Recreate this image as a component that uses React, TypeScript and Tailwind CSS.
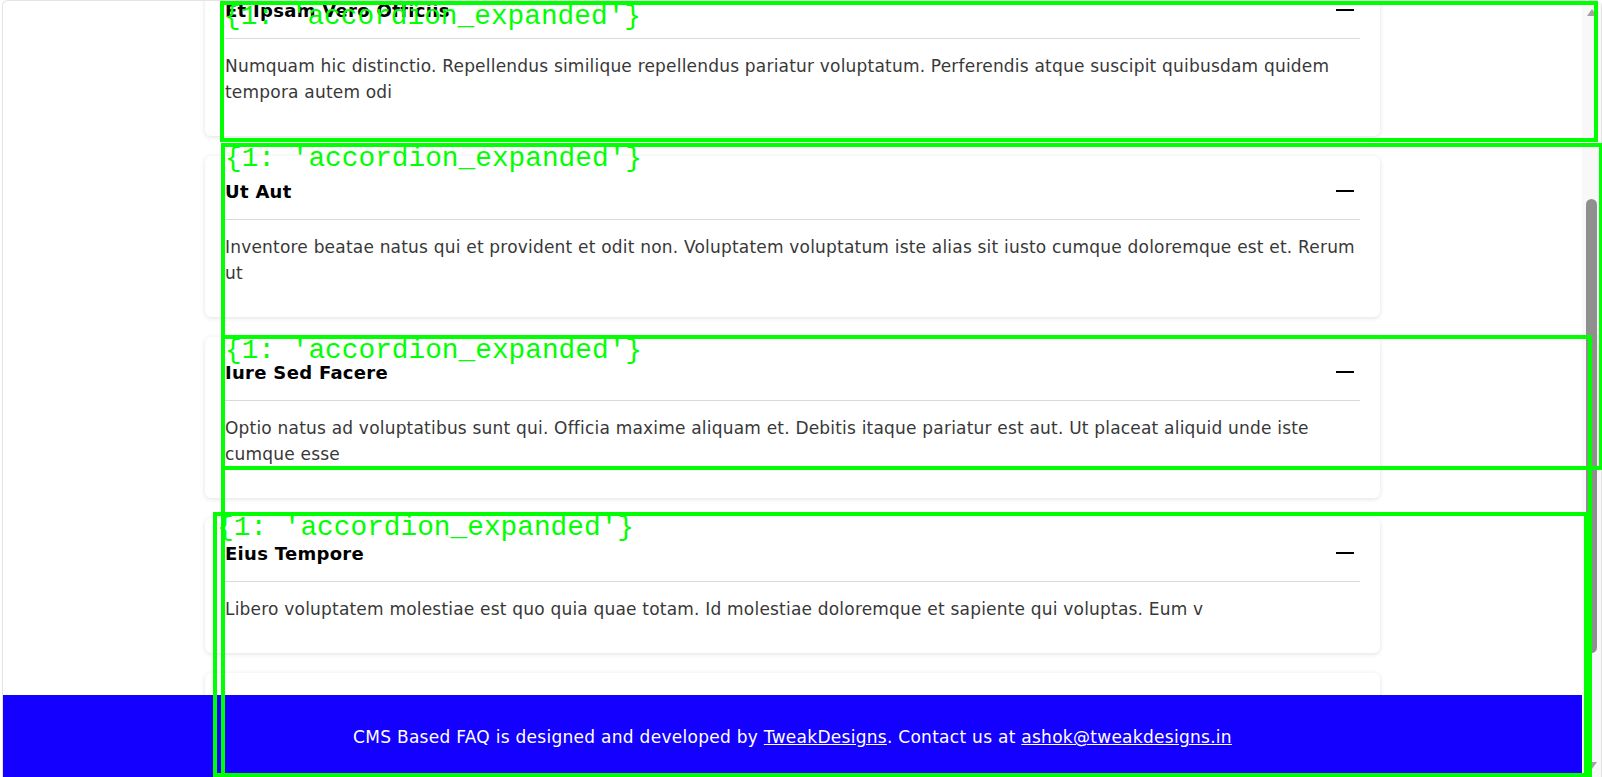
import React from "react";

const faqs = [
  {
    q: "Et Ipsam Vero Officiis",
    a: "Numquam hic distinctio. Repellendus similique repellendus pariatur voluptatum. Perferendis atque suscipit quibusdam quidem tempora autem odi",
  },
  {
    q: "Ut Aut",
    a: "Inventore beatae natus qui et provident et odit non. Voluptatem voluptatum iste alias sit iusto cumque doloremque est et. Rerum ut",
  },
  {
    q: "Iure Sed Facere",
    a: "Optio natus ad voluptatibus sunt qui. Officia maxime aliquam et. Debitis itaque pariatur est aut. Ut placeat aliquid unde iste cumque esse",
  },
  {
    q: "Eius Tempore",
    a: "Libero voluptatem molestiae est quo quia quae totam. Id molestiae doloremque et sapiente qui voluptas. Eum v",
  },
  {
    q: "Quia Dolorem",
    a: "Sed quia non numquam eius modi tempora incidunt ut labore et dolore.",
  },
];

// debug boxes drawn over the page: [left, top, right, bottom]
const boxes = [
  [220, 1, 1598, 142],
  [221, 143, 1603, 470],
  [221, 335, 1592, 777],
  [213, 512, 1588, 777],
];

function FaqCard({ q, a }: { q: string; a: string }) {
  return (
    <div className="w-[1175px] shrink-0 rounded-md bg-white p-5 shadow-[0_1px_5px_rgba(0,0,0,0.12)]">
      <div className="flex h-[30px] items-center justify-between">
        <h3 className="text-[18px] font-bold tracking-[0.3px] text-black">{q}</h3>
        <div className="mr-[6px] h-[2px] w-[18px] bg-black" />
      </div>
      <div className="mt-[13px] h-px bg-[#d9d9d9]" />
      <p className="mt-[14px] mb-[11px] text-[17px] leading-[26px] tracking-[0.2px] text-[#383838]">{a}</p>
    </div>
  );
}

export default function App() {
  return (
    <div className="relative h-screen w-full overflow-hidden bg-white pl-[2px] font-['DejaVu_Sans',sans-serif]">
      <div className="flex h-full rounded-t-md border border-b-0 border-[#e3e3e3]">
        <div className="flex min-w-0 flex-1 flex-col">
          <div className="flex-1 overflow-hidden">
            <div className="-mt-[26px] flex flex-col items-center gap-5">
              {faqs.map((f) => (
                <FaqCard key={f.q} q={f.q} a={f.a} />
              ))}
            </div>
          </div>
          <footer className="flex h-[82px] items-center justify-center bg-[#1400ff] pt-[4px] text-[17px] tracking-[0.28px] text-white">
            <p>
              CMS Based FAQ is designed and developed by{" "}
              <a href="#" className="underline">TweakDesigns</a>. Contact us at{" "}
              <a href="#" className="underline">ashok@tweakdesigns.in</a>
            </p>
          </footer>
        </div>

        {/* scrollbar */}
        <div className="flex w-[19px] flex-col items-center bg-[#f8f8f8]">
          <div className="mt-[8px] h-0 w-0 border-x-[5px] border-b-[7px] border-x-transparent border-b-[#a3a3a3]" />
          <div className="mt-[183px] h-[454px] w-[11px] rounded-full bg-[#8f8f8f]" />
          <div className="mt-auto mb-[8px] h-0 w-0 border-x-[5px] border-t-[7px] border-x-transparent border-t-[#a3a3a3]" />
        </div>
      </div>

      {boxes.map(([l, t, r, b], i) => (
        <div
          key={i}
          className="pointer-events-none absolute border-4 border-[#00ff00]"
          style={{ left: l, top: t, width: r - l, height: b - t }}
        >
          <span className="absolute -top-[2px] left-0 whitespace-nowrap font-['Liberation_Mono',monospace] text-[27.8px] leading-none text-[#00ff00]">
            {"{1: 'accordion_expanded'}"}
          </span>
        </div>
      ))}
    </div>
  );
}
